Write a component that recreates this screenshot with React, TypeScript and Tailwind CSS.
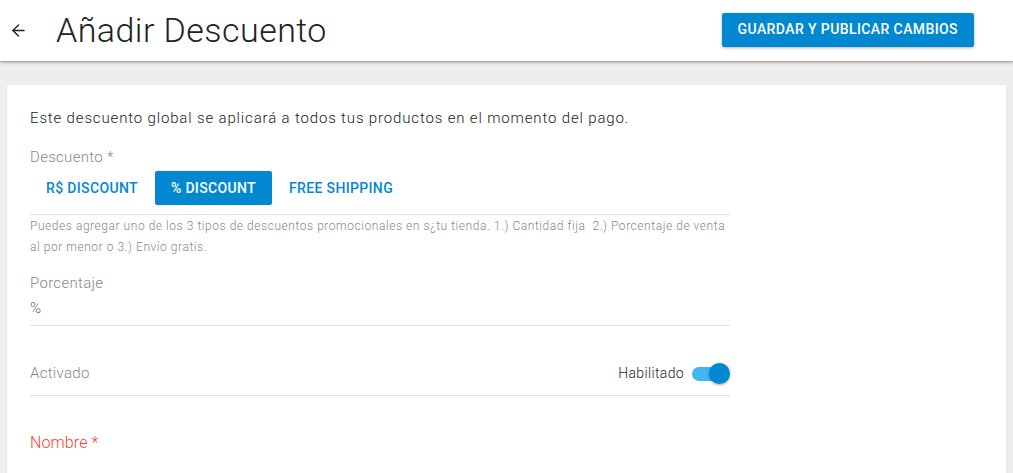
import { ArrowLeft } from "lucide-react";

const font = { fontFamily: "Roboto, 'Liberation Sans', sans-serif" };

function Toggle() {
  return (
    <span className="relative inline-flex h-[20px] w-[38px] items-center">
      <span className="absolute left-0 top-[4px] h-[14px] w-[34px] rounded-full bg-[#42b6f5]" />
      <span className="absolute right-0 top-0 h-[21px] w-[21px] rounded-full bg-[#0288d1] shadow-[0_1px_3px_rgba(0,0,0,0.35)]" />
    </span>
  );
}

export default function App() {
  return (
    <div className="min-h-[473px] bg-[#eeeeee] text-[#333]" style={font}>
      <header className="relative z-10 flex h-[61px] items-center justify-between bg-white pl-[9px] pr-[39px] shadow-[0_1px_3px_rgba(0,0,0,0.45)]">
        <div className="flex items-center">
          <ArrowLeft className="h-[19px] w-[19px] text-[#222]" strokeWidth={1.75} />
          <h1 className="ml-[28px] pb-[2px] text-[34px] font-light leading-none tracking-[0.45px] text-[#222]">Añadir Descuento</h1>
        </div>
        <button className="mb-[2px] h-[34px] rounded-[2px] bg-[#0288d1] px-[16px] text-[14px] font-medium tracking-[0.4px] text-white shadow-[0_1px_3px_rgba(0,0,0,0.3)]">
          GUARDAR Y PUBLICAR CAMBIOS
        </button>
      </header>

      <main className="px-[7px] pt-[24px]">
        <section className="h-[400px] bg-white pl-[23px] pt-[22px] shadow-[0_1px_2px_rgba(0,0,0,0.1)]">
          <div className="w-[700px]">
            <p className="text-[15px] font-light leading-[22px] tracking-[0.85px] text-[#222]">
              Este descuento global se aplicará a todos tus productos en el momento del pago.
            </p>

            <p className="mt-[17px] text-[15px] font-light leading-[22px] tracking-[0.3px] text-[#888]">Descuento *</p>
            <div className="mt-[3px] flex items-center gap-[17px] pl-[16px]">
              <button className="h-[34px] text-[14px] font-medium tracking-[0.35px] text-[#0288d1]">R$ DISCOUNT</button>
              <button className="h-[34px] rounded-[2px] bg-[#0288d1] px-[16px] text-[14px] font-medium tracking-[0.35px] text-white">
                % DISCOUNT
              </button>
              <button className="h-[34px] text-[14px] font-medium tracking-[0.35px] text-[#0288d1]">FREE SHIPPING</button>
            </div>
            <div className="mt-[9px] border-t border-[#e0e0e0] pt-[1px] text-[12px] font-light leading-[21px] tracking-[0.55px] text-[#888]">
              Puedes agregar uno de los 3 tipos de descuentos promocionales en s¿tu tienda. 1.) Cantidad fija&nbsp; 2.) Porcentaje de venta al por menor o 3.) Envío gratis.
            </div>

            <p className="mt-[14px] text-[15px] font-light leading-[22px] tracking-[0.3px] text-[#888]">Porcentaje</p>
            <p className="mt-[3px] text-[15px] font-light leading-[22px] text-[#666]">%</p>
            <div className="mt-[6px] border-t border-[#e0e0e0]" />

            <div className="mt-[36px] flex h-[22px] items-center justify-between">
              <span className="text-[15px] font-light tracking-[0.3px] text-[#888]">Activado</span>
              <span className="flex items-center gap-[8px]">
                <span className="text-[14px] font-light tracking-[0.35px] text-[#222]">Habilitado</span>
                <Toggle />
              </span>
            </div>
            <div className="mt-[11px] border-t border-[#e0e0e0]" />

            <p className="mt-[36px] text-[16px] font-light leading-[22px] tracking-[0.1px] text-[#f44336]">Nombre *</p>
          </div>
        </section>
      </main>
    </div>
  );
}
